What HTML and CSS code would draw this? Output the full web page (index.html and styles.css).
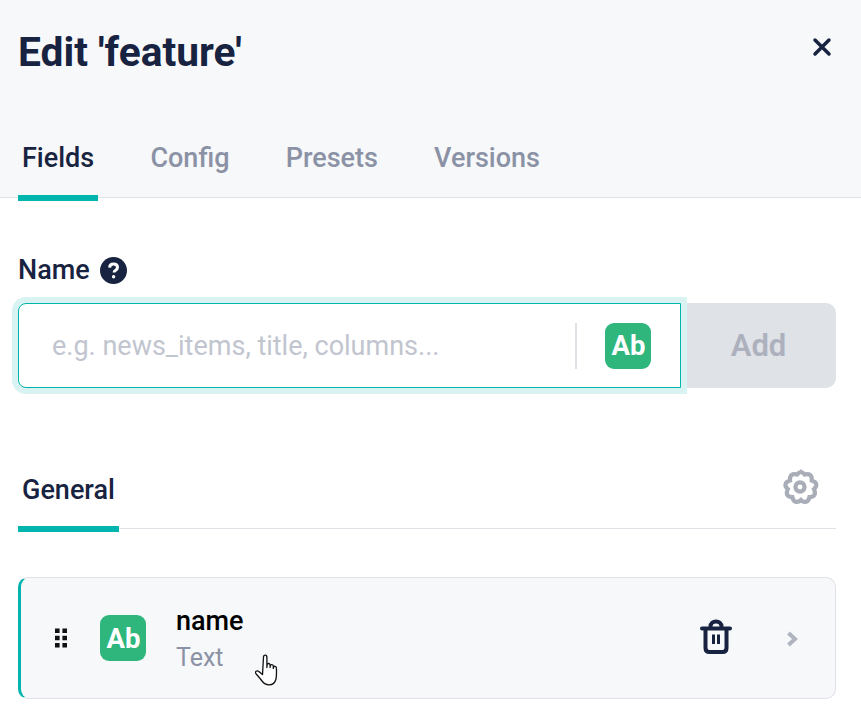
FILE: index.html
```html
<!DOCTYPE html>
<html lang="en">
<head>
<meta charset="utf-8">
<title>Edit 'feature'</title>
<link rel="stylesheet" href="styles.css">
</head>
<body>
<header class="drawer-head">
  <div class="title-row">
    <h1 class="title">Edit 'feature'</h1>
    <svg class="close" viewBox="0 0 20 20" width="20" height="20"><path d="M3 3L17 17M17 3L3 17"/></svg>
  </div>
  <nav class="tabs">
    <span class="tab active">Fields</span>
    <span class="tab">Config</span>
    <span class="tab">Presets</span>
    <span class="tab">Versions</span>
  </nav>
</header>
<main class="content">
  <div class="label-row">
    <span class="label">Name</span>
    <svg class="help" viewBox="0 0 27 27" width="27" height="27">
      <circle cx="13.5" cy="13.5" r="13.5"/>
      <path class="help-q" d="M9.6 10.6c.1-2.3 1.700-3.600 4-3.600 2.300 0 3.900 1.300 3.900 3.300 0 1.500-.8 2.300-1.900 3-1 .6-1.500 1.100-1.500 2.200"/>
      <circle class="help-dot" cx="13.600" cy="19.800" r="1.700"/>
    </svg>
  </div>
  <div class="add-row">
    <div class="input">
      <span class="placeholder">e.g. news_items, title, columns...</span>
      <span class="divider"></span>
      <span class="badge">Ab</span>
    </div>
    <div class="add-btn">Add</div>
  </div>
  <div class="section-tabs">
    <span class="section-tab">General</span>
    <svg class="gear" viewBox="0 0 24 24" width="42" height="42"><path d="M12 3.200c1.300 0 2.100 1 2.700 1.700.9-.3 2.200-.5 3.200.3.900.8.900 2.100.8 3.100 1 .3 2.300.9 2.600 2.200.2 1.200-.6 2.100-1.300 2.700.4.900.9 2.100.3 3.200-.6 1.100-1.900 1.300-2.900 1.300-.2 1-.7 2.300-1.900 2.700-1.200.4-2.300-.3-3-1-.7.700-1.800 1.400-3 1-1.200-.4-1.700-1.700-1.900-2.700-1 0-2.300-.2-2.900-1.300-.6-1.100-.1-2.300.3-3.200-.7-.6-1.500-1.500-1.300-2.700.3-1.300 1.600-1.900 2.600-2.200-.1-1-.1-2.300.8-3.100 1-.8 2.300-.6 3.200-.3.600-.7 1.400-1.700 2.700-1.700z"/><circle cx="12" cy="12" r="2.600"/></svg>
  </div>
  <article class="field-card">
    <svg class="drag" viewBox="0 0 14 20" width="14" height="20"><path d="M1 .5h4.600v4.600H1zM8.400 .5H13v4.600H8.400zM1 7.700h4.600v4.600H1zM8.400 7.700H13v4.600H8.400zM1 14.900h4.600v4.600H1zM8.400 14.900H13v4.600H8.400z"/></svg>
    <span class="badge">Ab</span>
    <div class="field-text">
      <span class="field-name">name</span>
      <span class="field-type">Text</span>
    </div>
    <svg class="trash" viewBox="0 0 32 36" width="32" height="36"><path d="M2 9.500h28M5.500 10v19c0 2.700 1.500 4 4 4h13c2.500 0 4-1.300 4-4V10M10.500 9V7.500C10.500 4 13 2.500 16 2.500s5.500 1.500 5.500 5V9"/><path class="trash-bars" d="M12 15.500h3v9.500h-3zM17 15.500h3v9.500h-3z"/></svg>
    <svg class="chevron" viewBox="0 0 12 16" width="12" height="16"><path d="M2.500 2L9 8l-6.500 6"/></svg>
    <svg class="pointer" viewBox="0 0 25 34" width="25" height="34"><path d="M8.500 3c0-2.600 3.400-2.600 3.400 0v10.500l.2-2.600c.2-2 3-1.800 3 .2v2.300l.2-1.500c.3-1.900 3-1.600 3 .3v2.200l.2-1c.4-1.700 2.900-1.400 2.900.4 0 3.500.4 8 -.4 11.200-.8 3.300-3.200 5.800-7 5.800-3.300 0-5.300-1.400-7-3.800-1.500-2.100-4-5-6-7.300-1.500-1.900.9-3.800 2.800-2.300l3.700 3.200z"/></svg>
  </article>
</main>
</body>
</html>
```
FILE: styles.css
```css
* { box-sizing: border-box; }
html, body { margin: 0; padding: 0; }
body {
  width: 861px;
  height: 714px;
  overflow: hidden;
  background: #fff;
  font-family: Roboto, "Liberation Sans", sans-serif;
  color: #172340;
}
.drawer-head {
  height: 198px;
  background: #f7f8fa;
  border-bottom: 1px solid #e0e2e7;
  padding: 0 18px;
}
.title-row {
  height: 103px;
  display: flex;
  align-items: center;
  justify-content: space-between;
  padding-right: 11px;
}
.title {
  margin: 0;
  font-size: 40.7px;
  line-height: 48px;
  font-weight: 700;
  color: #172340;
}
.close { fill: none; stroke: #172340; stroke-width: 3.500; stroke-linecap: round; margin-top: -10px; }
.tabs { display: flex; gap: 48.2px; height: 98px; }
.tab {
  height: 98px;
  padding: 36px 4px 0;
  font-size: 27px;
  line-height: 38px;
  font-weight: 500;
  color: #8b92a5;
  white-space: nowrap;
}
.tab.active { color: #172340; border-bottom: 6px solid #00b5ad; }
.content { padding: 0 25px 0 18px; }
.label-row {
  margin-top: 58px;
  height: 28px;
  display: flex;
  align-items: center;
  gap: 10px;
}
.label { font-size: 27px; line-height: 28px; font-weight: 500; color: #172340; }
.help circle:first-child { fill: #172340; }
.help-q { fill: none; stroke: #fff; stroke-width: 3; }
.help-dot { fill: #fff; }
.add-row { margin-top: 19px; display: flex; height: 85px; }
.input {
  position: relative;
  z-index: 1;
  width: 663px;
  height: 85px;
  display: flex;
  align-items: center;
  padding-left: 33px;
  background: #fff;
  border: 1px solid #00b5ad;
  border-radius: 8px 0 0 8px;
  box-shadow: 0 0 0 6px #d9f3f2;
}
.placeholder { font-size: 27px; color: #c1c5cf; width: 523px; white-space: nowrap; }
.divider { width: 2px; height: 46px; background: #dfe2e7; margin-right: 28px; }
.badge {
  flex: none;
  width: 46px;
  height: 46px;
  padding-left: 1px;
  border-radius: 9px;
  background: #2eb67d;
  color: #fff;
  font-size: 27.5px;
  font-weight: 700;
  display: flex;
  align-items: center;
  justify-content: center;
}
.add-btn {
  width: 155px;
  height: 85px;
  background: #dfe2e7;
  border-radius: 0 10px 10px 0;
  color: #adb1bd;
  font-size: 31px;
  font-weight: 600;
  display: flex;
  align-items: center;
  justify-content: center;
}
.section-tabs {
  margin-top: 72px;
  height: 69px;
  width: 818px;
  display: flex;
  justify-content: space-between;
  border-bottom: 1px solid #e0e2e7;
  position: relative;
}
.section-tab {
  width: 101px;
  height: 72px;
  padding: 0 4px;
  font-size: 27px;
  line-height: 60px;
  font-weight: 500;
  color: #172340;
  border-bottom: 6px solid #00b5ad;
}
.gear { fill: none; stroke: #a9adb8; stroke-width: 2.400; margin: 6px 15px 0 0; }
.field-card {
  position: relative;
  margin-top: 48px;
  width: 818px;
  height: 122px;
  display: flex;
  align-items: center;
  padding-left: 33px;
  background: #f7f8fa;
  border: 1px solid #e0e2e7;
  border-left: 3px solid #00b5ad;
  border-radius: 10px;
}
.drag { fill: #111; flex: none; margin-right: 32px; }
.field-text { display: flex; flex-direction: column; margin-left: 30px; margin-top: 7px; width: 524px; }
.field-name { font-size: 27px; line-height: 37px; font-weight: 500; color: #000; margin-top: -4px; }
.field-type { font-size: 25px; line-height: 36px; color: #8b92a5; }
.trash { fill: none; stroke: #172340; stroke-width: 4; stroke-linecap: round; stroke-linejoin: round; flex: none; margin-top: -3px; }
.trash-bars { fill: #172340; stroke: none; }
.chevron { fill: none; stroke: #b0b4bf; stroke-width: 4; flex: none; margin-left: 54px; margin-top: 2px; }
.pointer {
  position: absolute;
  left: 234px;
  top: 76px;
  fill: #fff;
  stroke: #111;
  stroke-width: 1.300;
  stroke-linejoin: round;
}
```
